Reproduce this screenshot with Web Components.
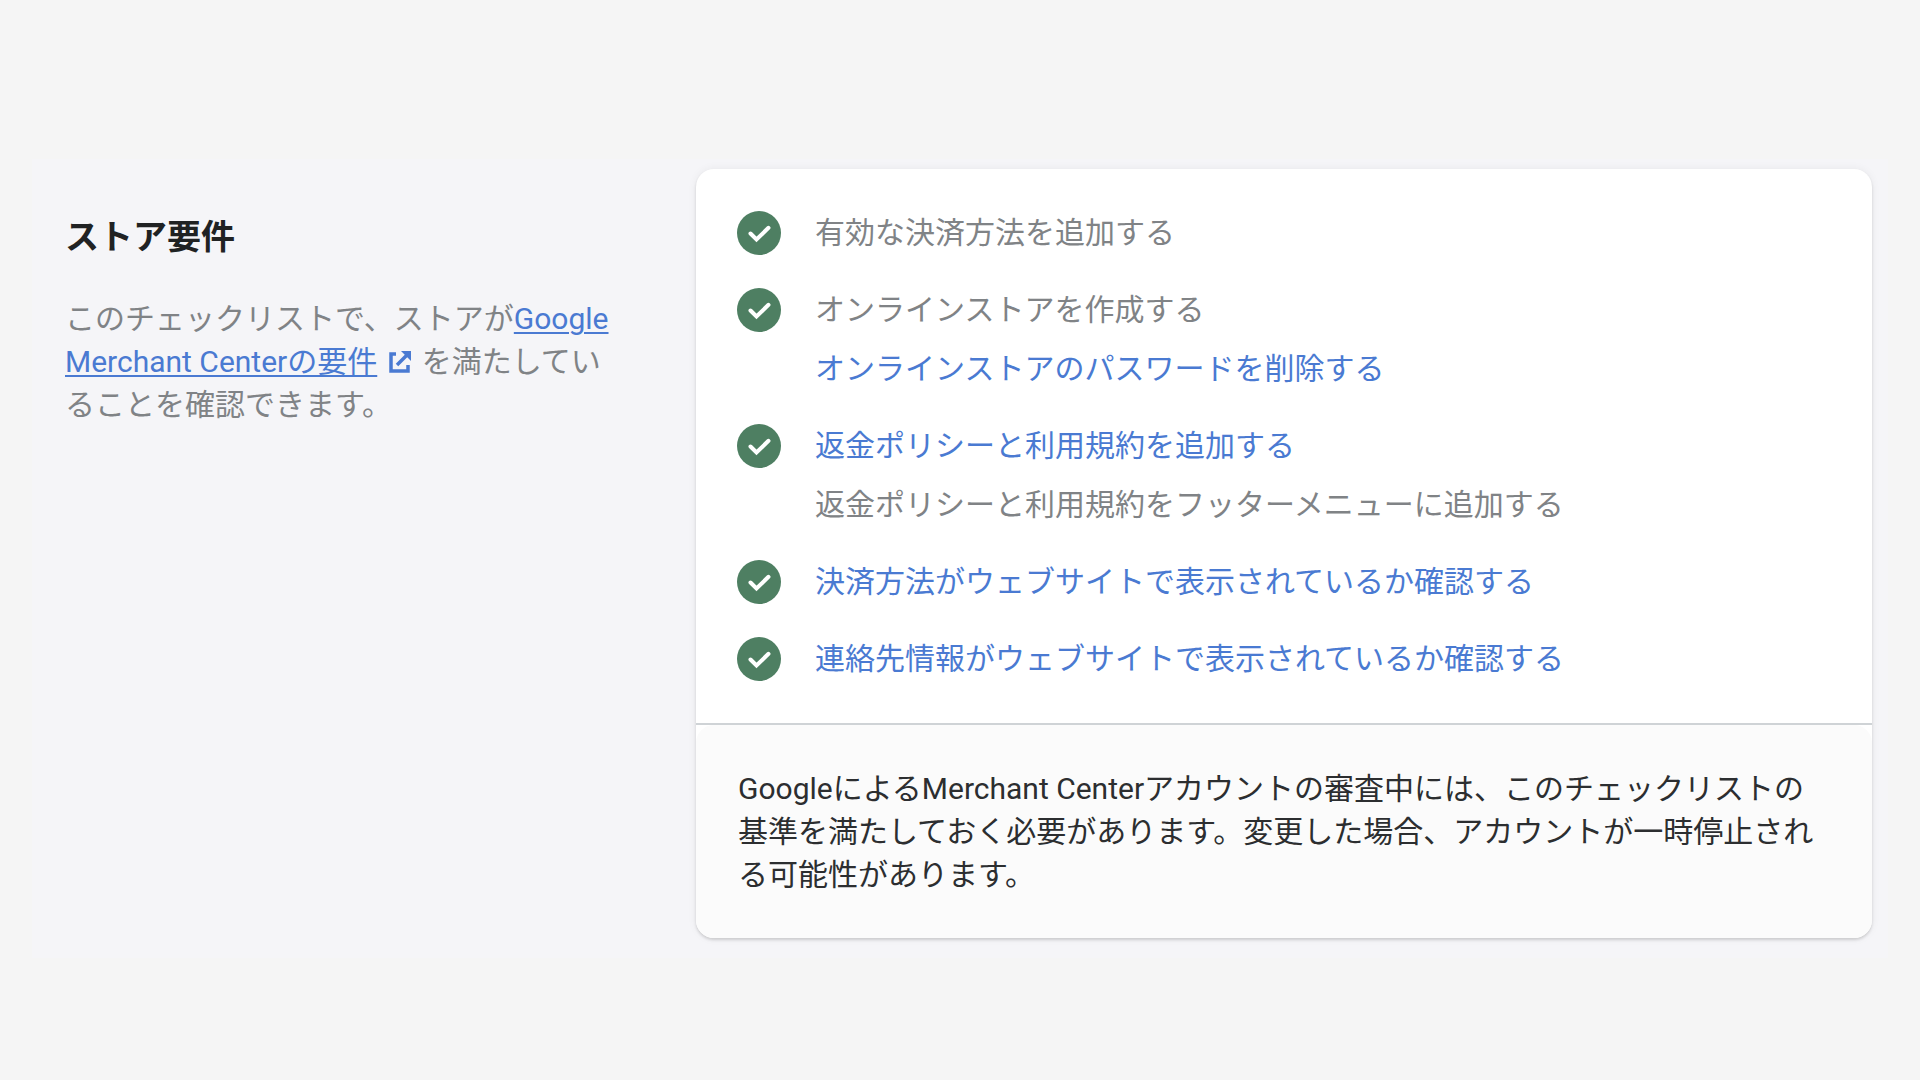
<!DOCTYPE html>
<html lang="ja">
<head>
<meta charset="utf-8">
<title>ストア要件</title>
<style>
  body {
    margin: 0;
    background: #f5f5f5;
    color: #2c2e30;
    font-family: Roboto, "Noto Sans CJK JP", sans-serif;
    font-size: 30px;
    line-height: 43px;
    --subdued: #808386;
    --link: #4a7ad2;
    --success: #4e7f62;
  }
</style>
</head>
<body>
<annotated-section>
  <h2 slot="title">ストア要件</h2>
  <span slot="description">このチェックリストで、ストアが<external-link href="#requirements">Google Merchant Centerの要件</external-link> を満たしていることを確認できます。</span>
  <check-card>
    <check-item>有効な決済方法を追加する</check-item>
    <check-item>オンラインストアを作成する<a slot="detail" href="#password">オンラインストアのパスワードを削除する</a></check-item>
    <check-item><a href="#policies">返金ポリシーと利用規約を追加する</a><span slot="detail">返金ポリシーと利用規約をフッターメニューに追加する</span></check-item>
    <check-item><a href="#payments">決済方法がウェブサイトで表示されているか確認する</a></check-item>
    <check-item><a href="#contact">連絡先情報がウェブサイトで表示されているか確認する</a></check-item>
    <span slot="footer">GoogleによるMerchant Centerアカウントの審査中には、このチェックリストの基準を満たしておく必要があります。変更した場合、アカウントが一時停止される可能性があります。</span>
  </check-card>
</annotated-section>

<template id="annotated-section">
  <style>
    :host {
      display: grid;
      grid-template-columns: minmax(0, 556fr) minmax(0, 1176fr);
      column-gap: 75px;
      align-items: start;
      margin: 159px 32px 80px;
      padding: 10px 16px 20px 33px;
      background: #f5f5f8;
    }
    header { padding-top: 47px; }
    ::slotted(h2) { margin: 0; font-size: 34px; line-height: 43px; font-weight: 700; color: #202223; }
    p { margin: 38px 0 0; color: var(--subdued); }
  </style>
  <header>
    <slot name="title"></slot>
    <p><slot name="description"></slot></p>
  </header>
  <slot></slot>
</template>

<template id="external-link"><style>
    :host { display: inline; }
    a { color: var(--link); text-decoration: none; }
    span { text-decoration: underline; text-decoration-thickness: 2px; text-underline-offset: 3px; }
    svg { width: 24px; height: 24px; margin: 0 2px 0 11px; vertical-align: -2px; }
  </style><a><span><slot></slot></span><svg viewBox="0 0 24 24" fill="none" stroke="currentColor" stroke-width="3.500" aria-hidden="true"><path d="M8 4H3v17h17v-6M9 15 20 4"/><path d="M13 1h10v10l-3.500-3.500-3-3z" fill="currentColor" stroke="none"/></svg></a></template>

<template id="check-card">
  <style>
    :host {
      display: block;
      background: #fff;
      border-radius: 18px;
      box-shadow: 0 0 10px rgba(23, 24, 24, .06), 0 2px 3px rgba(0, 0, 0, .14);
    }
    .list { display: flex; flex-direction: column; gap: 34px; padding: 42px 41px 43px; }
    .rule { height: 2px; background: #cfd3d6; }
    footer { padding: 42px; background: #fbfbfb; border-radius: 18px; }
  </style>
  <div class="list" role="list"><slot></slot></div>
  <div class="rule"></div>
  <footer><slot name="footer"></slot></footer>
</template>

<template id="check-item">
  <style>
    :host { display: flex; align-items: flex-start; gap: 34px; color: var(--subdued); }
    svg { flex: none; width: 44px; height: 44px; margin-bottom: -1px; }
    .text { display: flex; flex-direction: column; gap: 16px; min-width: 0; }
    ::slotted(a) { color: var(--link); text-decoration: none; }
  </style>
  <svg viewBox="0 0 44 44" role="img" aria-label="完了"><circle cx="22" cy="22" r="22" fill="var(--success)"/><path d="m13.500 22.500 6 6L31.500 16.800" fill="none" stroke="#fff" stroke-width="4" stroke-linecap="round"/></svg>
  <div class="text">
    <div><slot></slot></div>
    <slot name="detail"></slot>
  </div>
</template>

<script>
  class TemplateElement extends HTMLElement {
    constructor() {
      super();
      const template = document.getElementById(this.localName);
      this.attachShadow({ mode: "open" }).append(template.content.cloneNode(true));
    }
  }
  customElements.define("annotated-section", class extends TemplateElement {});
  customElements.define("check-card", class extends TemplateElement {});
  customElements.define("check-item", class extends TemplateElement {
    connectedCallback() { this.setAttribute("role", "listitem"); }
  });
  customElements.define("external-link", class extends TemplateElement {
    connectedCallback() { this.shadowRoot.querySelector("a").href = this.getAttribute("href"); }
  });
</script>
</body>
</html>
